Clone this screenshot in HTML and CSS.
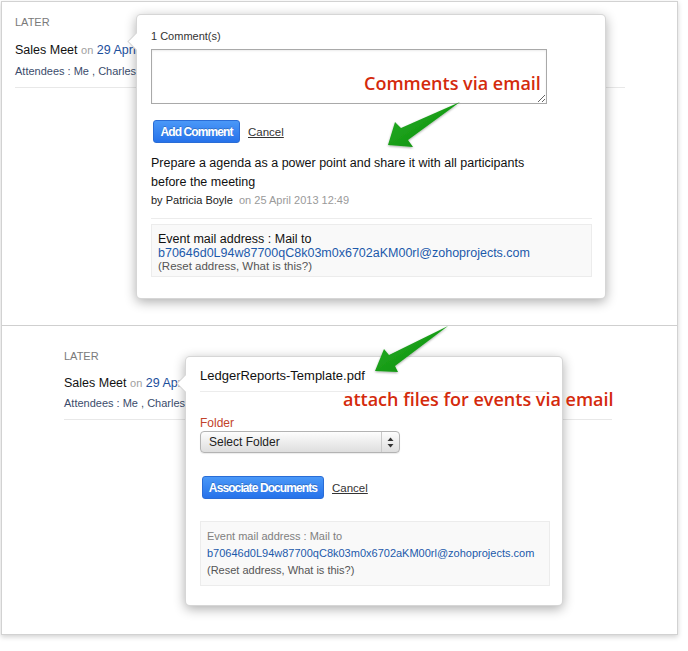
FILE: index.html
```html
<!DOCTYPE html>
<html lang="en">
<head>
<meta charset="utf-8">
<title>Event comments and attachments via email</title>
<link rel="stylesheet" href="styles.css">
</head>
<body>
<div class="frame">
  <section class="panel panel-top">
    <div class="list list-top">
      <div class="group-label">LATER</div>
      <div class="event event-top">
        <div class="event-title">Sales Meet <span class="on">on</span> <span class="date">29 April</span></div>
        <div class="attendees">Attendees : Me , Charles</div>
      </div>
    </div>

    <div class="popover popover-comment">
      <div class="comment-count">1 Comment(s)</div>
      <textarea class="comment-input"></textarea>
      <div class="actions actions-comment">
        <button class="btn btn-add">Add Comment</button>
        <a class="cancel" href="#">Cancel</a>
      </div>
      <p class="comment-text">Prepare a agenda as a power point and share it with all participants before the meeting</p>
      <div class="comment-meta"><span class="author">by Patricia Boyle</span> <span class="when">on 25 April 2013 12:49</span></div>
      <div class="mail-box mail-box-lg">
        <div class="mail-label">Event mail address : Mail to</div>
        <div class="mail-addr">b70646d0L94w87700qC8k03m0x6702aKM00rl@zohoprojects.com</div>
        <div class="mail-help">(Reset address, What is this?)</div>
      </div>
    </div>
  </section>

  <section class="panel panel-bottom">
    <div class="list list-bottom">
      <div class="group-label">LATER</div>
      <div class="event event-bottom">
        <div class="event-title">Sales Meet <span class="on">on</span> <span class="date">29 April</span></div>
        <div class="attendees">Attendees : Me , Charles</div>
      </div>
    </div>

    <div class="popover popover-docs">
      <div class="doc-title">LedgerReports-Template.pdf</div>
      <div class="field-label">Folder</div>
      <div class="select">
        <span class="select-label">Select Folder</span>
        <span class="select-arrows">
          <svg width="7" height="11" viewBox="0 0 7 11"><path d="M3.5 0.5 L6.5 4 L0.5 4 Z" fill="#333"/><path d="M3.5 10.5 L6.5 7 L0.5 7 Z" fill="#333"/></svg>
        </span>
      </div>
      <div class="actions actions-docs">
        <button class="btn btn-assoc">Associate Documents</button>
        <a class="cancel" href="#">Cancel</a>
      </div>
      <div class="mail-box mail-box-sm">
        <div class="mail-label">Event mail address : Mail to</div>
        <div class="mail-addr">b70646d0L94w87700qC8k03m0x6702aKM00rl@zohoprojects.com</div>
        <div class="mail-help">(Reset address, What is this?)</div>
      </div>
    </div>
  </section>
</div>

<div class="annotation annotation-comments">Comments via email</div>
<div class="annotation annotation-files">attach files for events via email</div>

<svg class="callouts" width="688" height="651" viewBox="0 0 688 651">
  <defs>
    <linearGradient id="arrowFill" x1="0" y1="0" x2="1" y2="1">
      <stop offset="0" stop-color="#2bb12a"/>
      <stop offset="1" stop-color="#078a07"/>
    </linearGradient>
    <filter id="arrowShadow" x="-20%" y="-20%" width="140%" height="140%">
      <feDropShadow dx="0" dy="1" stdDeviation="1.2" flood-color="#000" flood-opacity="0.35"/>
    </filter>
  </defs>
  <polygon points="460,102 401,128 395,122 388,145 413,147 408,140" fill="url(#arrowFill)" filter="url(#arrowShadow)"/>
  <polygon points="448,326 389,355 384,349 375,371 398,372 395,366" fill="url(#arrowFill)" filter="url(#arrowShadow)"/>
</svg>
</body>
</html>
```
FILE: styles.css
```css
* { box-sizing: border-box; }

body {
  margin: 0;
  position: relative;
  width: 688px;
  height: 651px;
  overflow: hidden;
  background: #fff;
  font-family: "Liberation Sans", Arial, sans-serif;
  color: #222;
}

.frame {
  margin: 1px 0 0 1px;
  width: 677px;
  height: 634px;
  border: 1px solid #d2d2d2;
  box-shadow: 0 2px 5px rgba(0, 0, 0, 0.18);
  background: #fff;
}

.panel { position: relative; overflow: visible; }
.panel-top { height: 323px; }
.panel-bottom { height: 309px; border-top: 1px solid #cfcfcf; }

.list-top { padding: 13px 0 0 13px; width: 623px; }
.list-bottom { padding: 23px 0 0 62px; width: 610px; }

.group-label {
  font-size: 11px;
  line-height: 14px;
  color: #7a7a7a;
}

.event {
  border-bottom: 1px solid #e8e8e8;
  padding-bottom: 8px;
  white-space: nowrap;
}
.event-top { margin-top: 12px; }
.event-bottom { margin-top: 11px; }

.event-title {
  font-size: 12.5px;
  line-height: 18px;
  color: #111;
}
.event-title .on { font-size: 11px; color: #a0a0a0; }
.event-title .date { color: #1d4f9c; }

.attendees {
  margin-top: 4px;
  font-size: 11px;
  line-height: 16px;
  color: #3b4c6b;
}
.event-bottom .attendees { margin-top: 3px; }

/* Popovers */
.popover {
  position: absolute;
  background: #fff;
  border: 1px solid rgba(0, 0, 0, 0.16);
  border-radius: 5px;
  box-shadow: 0 3px 12px rgba(0, 0, 0, 0.32);
}
.popover::before {
  content: "";
  position: absolute;
  left: -7px;
  top: 20px;
  width: 12px;
  height: 12px;
  background: #fff;
  border-left: 1px solid rgba(0, 0, 0, 0.16);
  border-bottom: 1px solid rgba(0, 0, 0, 0.16);
  transform: rotate(45deg);
}

.popover-comment {
  left: 134px;
  top: 12px;
  width: 470px;
  height: 285px;
  padding: 14px 13px 0 14px;
}

.comment-count {
  font-size: 11px;
  line-height: 14px;
  color: #333;
}

.comment-input {
  display: block;
  margin-top: 6px;
  width: 396px;
  height: 55px;
  border: 1px solid #a9a9a9;
  border-radius: 0;
  padding: 4px;
  font-family: inherit;
  box-shadow: inset 0 1px 2px rgba(0, 0, 0, 0.08);
  resize: both;
}

.actions {
  display: flex;
  align-items: center;
  gap: 8px;
}
.actions-comment { margin-top: 16px; padding-left: 2px; }
.actions-docs { margin-top: 23px; padding-left: 2px; }

.btn {
  height: 23px;
  border: 1px solid #2a6dd6;
  border-radius: 3px;
  background: linear-gradient(#4a98f8, #2672ea);
  color: #fff;
  font-family: "Liberation Sans", Arial, sans-serif;
  font-weight: bold;
  font-size: 12px;
  letter-spacing: -0.9px;
  text-shadow: 0 -1px 0 rgba(0, 0, 0, 0.2);
  padding: 0;
  text-align: center;
}
.btn-add { width: 87px; }
.btn-assoc { width: 122px; }

.cancel {
  font-size: 11.5px;
  color: #333;
  text-decoration: underline;
  margin-top: 1px;
}

.comment-text {
  margin: 11px 0 0;
  font-size: 12.5px;
  line-height: 19px;
  color: #111;
  width: 400px;
}

.comment-meta {
  margin-top: 1px;
  font-size: 11px;
  line-height: 14px;
}
.comment-meta .author { color: #222; }
.comment-meta .when { color: #9a9a9a; margin-left: 3px; }

.mail-box {
  background: #f9f9f9;
  border: 1px solid #ececec;
}
.mail-box-lg {
  position: relative;
  margin-top: 17px;
  width: 441px;
  height: 53px;
  padding: 7px 6px 0;
  font-size: 12.5px;
  line-height: 14px;
}
.mail-box-lg::before {
  content: "";
  position: absolute;
  left: -1px;
  right: -1px;
  top: -7px;
  border-top: 1px solid #ececec;
}
.mail-box-lg .mail-label { color: #111; }
.mail-box-lg .mail-addr { color: #1c5aab; }
.mail-box-lg .mail-help { color: #555; font-size: 11.5px; line-height: 13px; }

.popover-docs {
  left: 183px;
  top: 30px;
  width: 378px;
  height: 250px;
  padding: 11px 12px 0 14px;
}

.doc-title {
  font-size: 13px;
  line-height: 16px;
  color: #111;
  padding-bottom: 7px;
  border-bottom: 1px solid #ececec;
  width: 348px;
}

.field-label {
  margin-top: 24px;
  font-size: 12px;
  line-height: 15px;
  color: #c2432b;
}

.select {
  width: 200px;
  height: 22px;
  border: 1px solid #b3b3b3;
  border-radius: 4px;
  background: linear-gradient(#fdfdfd, #ececec 55%, #dedede);
  box-shadow: 0 1px 1px rgba(0, 0, 0, 0.08);
  display: flex;
  align-items: center;
}
.select-label {
  flex: 1;
  padding-left: 8px;
  font-size: 12px;
  color: #222;
}
.select-arrows {
  width: 18px;
  height: 100%;
  border-left: 1px solid #c9c9c9;
  display: flex;
  align-items: center;
  justify-content: center;
}

.mail-box-sm {
  margin-top: 22px;
  width: 350px;
  height: 65px;
  padding: 6px 6px 0;
  font-size: 11px;
  line-height: 17px;
}
.mail-box-sm .mail-label { color: #808080; }
.mail-box-sm .mail-addr { color: #1c5aab; }
.mail-box-sm .mail-help { color: #555; }

/* Red callout text and arrows laid over the screenshot */
.annotation {
  position: absolute;
  font-family: "Open Sans", "Liberation Sans", sans-serif;
  font-weight: 600;
  font-size: 18px;
  line-height: 24px;
  color: #d42a0c;
  white-space: nowrap;
}
.annotation-comments { left: 364px; top: 71px; }
.annotation-files { left: 343px; top: 387px; }

.callouts {
  position: absolute;
  left: 0;
  top: 0;
  pointer-events: none;
}
```
